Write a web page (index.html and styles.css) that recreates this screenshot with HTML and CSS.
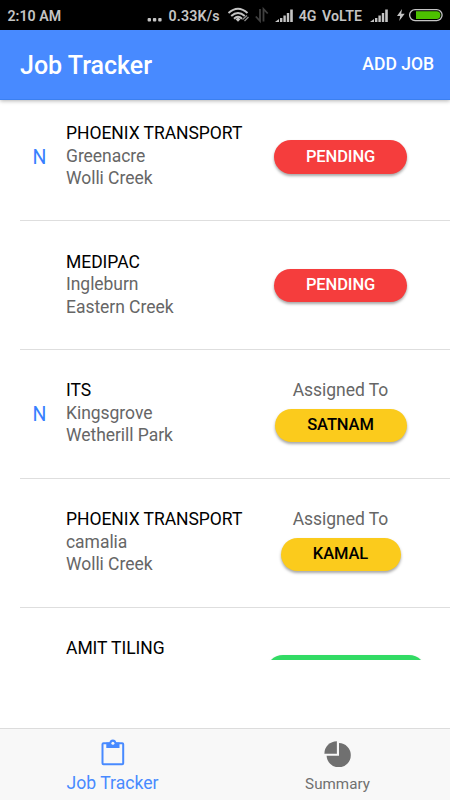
FILE: index.html
```html
<!DOCTYPE html>
<html lang="en">
<head>
    <meta charset="UTF-8">
    <meta name="viewport" content="width=device-width, initial-scale=1.0">
    <title>Job Tracker</title>
    <link rel="stylesheet" href="styles.css">
</head>
<body>
    <div class="status-bar">
        <span class="clock">2:10 AM</span>
        <svg class="status-icons" width="300" height="30" viewBox="0 0 300 30">
            <!-- more notifications -->
            <g fill="#c4c4c4">
                <rect x="-2.4" y="18" width="3.4" height="3.4" rx="1"/>
                <rect x="2.9" y="18" width="3.4" height="3.4" rx="1"/>
                <rect x="8.2" y="18" width="3.4" height="3.4" rx="1"/>
            </g>
            <text class="status-text" x="18.5" y="20.6" textLength="51">0.33K/s</text>
            <!-- wifi -->
            <g fill="none" stroke="#c4c4c4" stroke-width="1.9">
                <path d="M78.5 13 Q88 4.500 97.500 13"/>
                <path d="M81.200 16 Q88 9.800 94.800 16"/>
                <path d="M84 18.700 Q88 15 92 18.700"/>
            </g>
            <path d="M85.500 19.200 L88 17.600 L90.500 19.200 L88 21.800 Z" fill="#c4c4c4"/>
            <path d="M92.500 19.500 L97 15.500 M94.500 21 L98.500 17" stroke="#8c8c8c" stroke-width="1.300"/>
            <!-- data arrows -->
            <path d="M110 9 V21 L105.800 16.500 M113.500 21.500 V9 L117.700 13.500" fill="none" stroke="#404040" stroke-width="1.800"/>
            <!-- signal -->
            <g fill="#c4c4c4">
                <path d="M125 22 L129 19 V22 Z"/>
                <rect x="130" y="18" width="2.400" height="4"/>
                <rect x="133.400" y="15.500" width="2.400" height="6.500"/>
                <rect x="136.800" y="13" width="2.400" height="9"/>
                <rect x="140.200" y="9.500" width="2.600" height="12.500"/>
            </g>
            <text class="status-text" x="148.800" y="20.600" textLength="17.500">4G</text>
            <text class="status-text" x="172" y="20.600" textLength="40">VoLTE</text>
            <g fill="#c4c4c4">
                <path d="M220 22 L224 19 V22 Z"/>
                <rect x="225" y="18" width="2.400" height="4"/>
                <rect x="228.400" y="15.500" width="2.400" height="6.500"/>
                <rect x="231.800" y="13" width="2.400" height="9"/>
                <rect x="235.200" y="9.500" width="2.600" height="12.500"/>
            </g>
            <!-- battery -->
            <path d="M252 9 L247 16 H250.200 L249.200 21 L254.700 13.800 H251.200 Z" fill="#c4c4c4"/>
            <rect x="259.600" y="9.600" width="32.500" height="11" rx="5.500" fill="none" stroke="#c4c4c4" stroke-width="1.300"/>
            <path d="M266 11.200 H286.500 A3.900 3.900 0 0 1 286.500 19 H266 Z" fill="#4cc000"/>
        </svg>
    </div>

    <header class="header">
        <h1>Job Tracker</h1>
        <button class="add-job">ADD JOB</button>
    </header>

    <main class="job-list">
        <div class="job">
            <div class="flag">N</div>
            <div class="details">
                <h2>PHOENIX TRANSPORT</h2>
                <p>Greenacre</p>
                <p>Wolli Creek</p>
            </div>
            <div class="state">
                <button class="pill pending">PENDING</button>
            </div>
        </div>
        <div class="job">
            <div class="flag"></div>
            <div class="details">
                <h2>MEDIPAC</h2>
                <p>Ingleburn</p>
                <p>Eastern Creek</p>
            </div>
            <div class="state">
                <button class="pill pending">PENDING</button>
            </div>
        </div>
        <div class="job">
            <div class="flag">N</div>
            <div class="details">
                <h2>ITS</h2>
                <p>Kingsgrove</p>
                <p>Wetherill Park</p>
            </div>
            <div class="state assigned">
                <p>Assigned To</p>
                <button class="pill driver">SATNAM</button>
            </div>
        </div>
        <div class="job">
            <div class="flag"></div>
            <div class="details">
                <h2>PHOENIX TRANSPORT</h2>
                <p>camalia</p>
                <p>Wolli Creek</p>
            </div>
            <div class="state assigned">
                <p>Assigned To</p>
                <button class="pill driver short">KAMAL</button>
            </div>
        </div>
        <div class="job">
            <div class="flag"></div>
            <div class="details">
                <h2>AMIT TILING</h2>
            </div>
            <div class="state">
                <button class="pill done"></button>
            </div>
        </div>
    </main>

    <nav class="tabs">
        <a class="tab active">
            <svg width="24" height="28" viewBox="0 0 24 28">
                <rect x="1.500" y="4.300" width="20.700" height="21" rx="1" fill="none" stroke="currentColor" stroke-width="2"/>
                <path fill="currentColor" fill-rule="evenodd" d="M5.300 3.500 H8.400 A3.500 3.500 0 0 1 15.300 3.500 H18.500 V9 H5.300 Z"/>
                <circle cx="11.900" cy="4.200" r="1.500" fill="#f8f8f8"/>
            </svg>
            <span>Job Tracker</span>
        </a>
        <a class="tab">
            <svg width="28" height="28" viewBox="0 0 28 28" fill="currentColor">
                <path d="M12.900 2.200 V14.700 H0.400 A12.500 12.500 0 0 1 12.900 2.200 Z"/>
                <path d="M15 4.100 A12.100 12.100 0 1 1 2.600 16.700 H15 Z"/>
            </svg>
            <span>Summary</span>
        </a>
    </nav>
</body>
</html>
```
FILE: styles.css
```css
* {
    margin: 0;
    padding: 0;
    box-sizing: border-box;
}

body {
    width: 450px;
    height: 800px;
    display: flex;
    flex-direction: column;
    overflow: hidden;
    background: #fff;
    color: #000;
    font-family: Roboto, sans-serif;
}

button {
    border: none;
    font-family: inherit;
}

.status-bar {
    height: 30px;
    flex: none;
    display: flex;
    align-items: center;
    justify-content: space-between;
    padding-left: 7.5px;
    background: #000;
}

.clock {
    font-size: 14.2px;
    font-weight: 600;
    line-height: 30px;
    padding-top: 1px;
    color: #c4c4c4;
}

.status-icons {
    overflow: visible;
}

.status-text {
    font-size: 14.2px;
    font-weight: 600;
    fill: #c4c4c4;
}

.header {
    height: 70px;
    flex: none;
    display: flex;
    align-items: center;
    justify-content: space-between;
    padding: 0 16px 0 20px;
    background: #488aff;
    border-bottom: 1px solid #3c80f0;
    box-shadow: 0 1px 4px rgba(0, 0, 0, 0.3);
    z-index: 1;
}

.header h1 {
    padding-top: 1px;
    font-size: 25px;
    font-weight: 500;
    color: #fff;
}

.add-job {
    padding-bottom: 2px;
    background: none;
    color: #fff;
    font-size: 17.5px;
    font-weight: 500;
}

.job-list {
    height: 560px;
    flex: none;
    padding-left: 20px;
    overflow: hidden;
}

.job {
    height: 128.8px;
    display: grid;
    grid-template-columns: 46px 184px 181px;
    padding-top: 29.5px;
    border-bottom: 1px solid #dedede;
}

.job:first-child {
    height: 121.2px;
    padding-top: 22px;
}

.flag {
    padding: 24px 0 0 12.5px;
    font-size: 19.5px;
    line-height: 24px;
    color: #3880ff;
}

.details h2,
.details p,
.state p {
    font-size: 17.5px;
    font-weight: 400;
    line-height: 22.5px;
    letter-spacing: -0.04px;
}

.details p,
.state p {
    color: #666;
}

.state {
    display: flex;
    flex-direction: column;
    align-items: center;
    padding-top: 18.2px;
}

.state.assigned {
    padding-top: 0;
}

.pill {
    width: 133px;
    height: 33.5px;
    flex: none;
    padding-bottom: 1.5px;
    border-radius: 17px;
    font-size: 16.5px;
    font-weight: 500;
    letter-spacing: -0.1px;
    box-shadow: 0 2px 3px rgba(0, 0, 0, 0.35);
}

.pending {
    background: #f53d3d;
    color: #fff;
}

.driver {
    width: 132px;
    margin-top: 7px;
    background: #fbcb1c;
    color: #000;
}

.short {
    width: 120px;
}

.done {
    width: 160px;
    margin-left: 11px;
    background: #32db64;
}

.tabs {
    height: 72px;
    flex: none;
    display: flex;
    margin-top: auto;
    background: #f8f8f8;
    border-top: 1px solid #dcdcdc;
}

.tab {
    flex: 1;
    display: flex;
    flex-direction: column;
    align-items: center;
    padding-top: 10px;
    gap: 5px;
    font-size: 15.2px;
    line-height: 24px;
    color: #707070;
}

.tab.active {
    gap: 4px;
    font-size: 17.6px;
    color: #488aff;
}
```
